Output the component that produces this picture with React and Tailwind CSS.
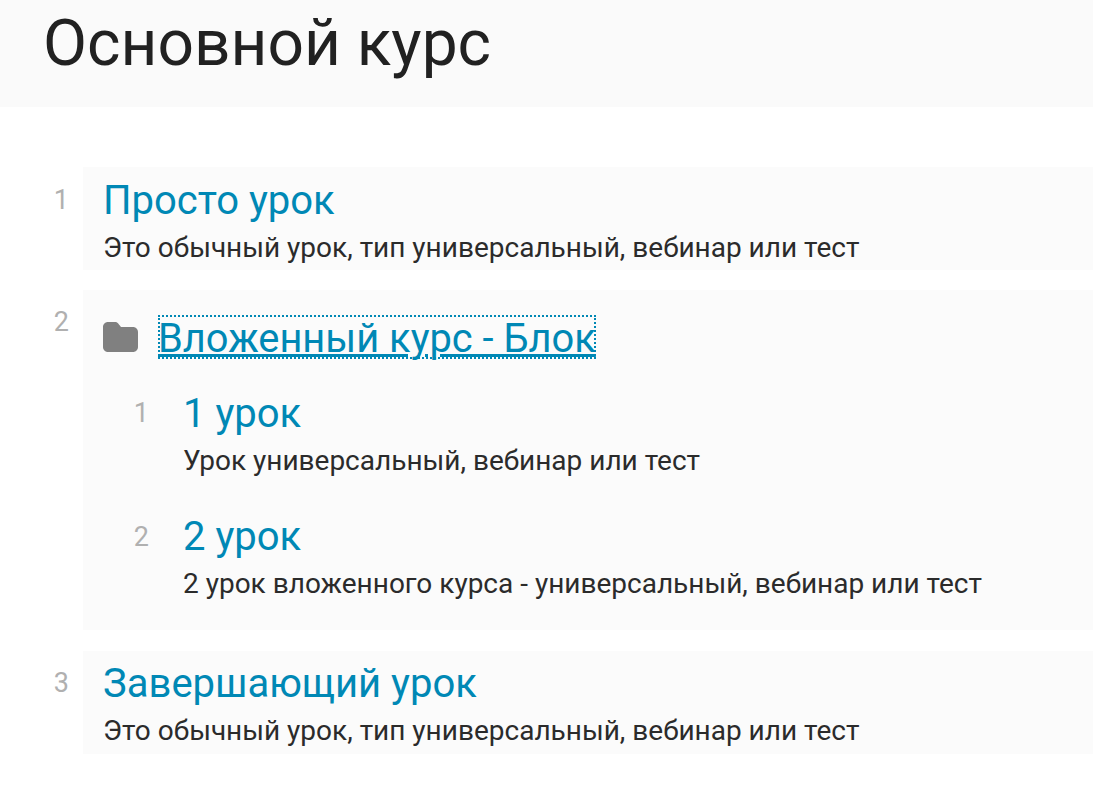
const lessonTitle = "text-[40px] leading-[44px] text-[#0088b5] block";
const lessonText = "mt-[9px] text-[28px] leading-[32px] text-[#2b2b2b] block";

function Num({ n, className }) {
    return <div className={`shrink-0 text-[27px] leading-[30px] text-[#b0b0b0] text-right ${className}`}>{n}</div>;
}

function FolderIcon() {
    return (
        <svg width="35" height="30" viewBox="0 0 35 30" className="shrink-0 mt-[4px]">
            <path d="M5 0h7c1.200 0 2.200.5 3 1.300L18 5h12c2.800 0 5 2.200 5 5v15c0 2.800-2.200 5-5 5H5c-2.800 0-5-2.200-5-5V5c0-2.800 2.200-5 5-5z" fill="#808080" />
        </svg>
    );
}

export default function App() {
    return (
        <div className="min-h-[795px] bg-white font-['Roboto',sans-serif] overflow-hidden">
            <div className="h-[107px] bg-[#fafafa] pl-[43px] pt-[8px]">
                <h1 className="text-[64px] leading-[72px] text-[#212121]">Основной курс</h1>
            </div>

            <div className="mt-[60px] flex flex-col">
                <div className="flex">
                    <Num n="1" className="w-[69px] mr-[14px] pt-[18px]" />
                    <div className="flex-1 h-[103px] bg-[#fbfbfb] pl-[20px] pt-[12px]">
                        <a className={lessonTitle}>Просто урок</a>
                        <span className={lessonText}>Это обычный урок, тип универсальный, вебинар или тест</span>
                    </div>
                </div>

                <div className="flex mt-[20px]">
                    <Num n="2" className="w-[69px] mr-[14px] pt-[17px]" />
                    <div className="flex-1 h-[340px] bg-[#fbfbfb] pl-[20px] pt-[28px]">
                        <div className="flex items-start gap-[20px] h-[42px]">
                            <FolderIcon />
                            <a className="-mt-[3px] h-[44px] text-[39.85px] leading-[48px] text-[#0088b5] underline outline-dotted outline-2 -outline-offset-2 outline-[#0088b5]">Вложенный курс - Блок</a>
                        </div>
                        <div className="flex mt-[32px]">
                            <Num n="1" className="w-[46px] mr-[34px] pt-[6px]" />
                            <div>
                                <a className={lessonTitle}>1 урок</a>
                                <span className={lessonText}>Урок универсальный, вебинар или тест</span>
                            </div>
                        </div>
                        <div className="flex mt-[38px]">
                            <Num n="2" className="w-[46px] mr-[34px] pt-[7px]" />
                            <div>
                                <a className={lessonTitle}>2 урок</a>
                                <span className={lessonText}>2 урок вложенного курса - универсальный, вебинар или тест</span>
                            </div>
                        </div>
                    </div>
                </div>

                <div className="flex mt-[21px]">
                    <Num n="3" className="w-[69px] mr-[14px] pt-[17px]" />
                    <div className="flex-1 h-[103px] bg-[#fbfbfb] pl-[20px] pt-[11px]">
                        <a className={lessonTitle}>Завершающий урок</a>
                        <span className={lessonText}>Это обычный урок, тип универсальный, вебинар или тест</span>
                    </div>
                </div>
            </div>
        </div>
    );
}
